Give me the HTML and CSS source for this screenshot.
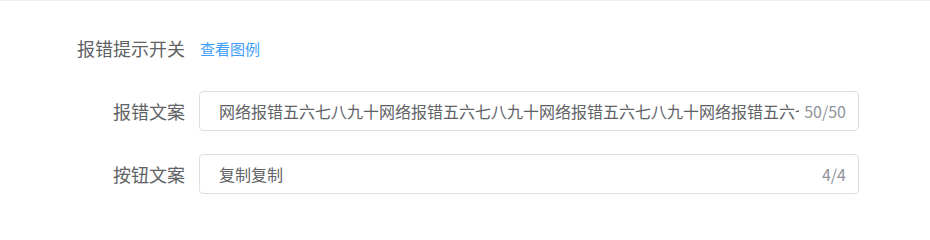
FILE: index.html
```html
<!DOCTYPE html>
<html lang="zh-CN">
<head>
<meta charset="utf-8">
<link rel="stylesheet" href="styles.css">
</head>
<body>
<div class="page">
  <form class="form">
    <div class="form-item">
      <label class="form-label">报错提示开关</label>
      <div class="form-content">
        <a class="link" href="#">查看图例</a>
      </div>
    </div>
    <div class="form-item">
      <label class="form-label">报错文案</label>
      <div class="form-content">
        <div class="input">
          <input class="input-inner" type="text" value="网络报错五六七八九十网络报错五六七八九十网络报错五六七八九十网络报错五六七八九十网络报错五六七八九十">
          <span class="count">50/50</span>
        </div>
      </div>
    </div>
    <div class="form-item">
      <label class="form-label">按钮文案</label>
      <div class="form-content">
        <div class="input">
          <input class="input-inner" type="text" value="复制复制">
          <span class="count">4/4</span>
        </div>
      </div>
    </div>
  </form>
</div>
</body>
</html>
```

FILE: styles.css
```css
html, body {
  margin: 0;
  padding: 0;
  background: #fff;
}
body {
  font-family: "Noto Sans CJK SC", "Noto Sans", sans-serif;
  color: #606266;
}
.page {
  border-top: 1px solid #eeeff2;
  padding-top: 27px;
  height: 221px;
  box-sizing: border-box;
}
.form {
  margin: 0;
}
.form-item {
  display: flex;
  align-items: center;
  height: 40px;
  margin-bottom: 23px;
}
.form-label {
  width: 199px;
  box-sizing: border-box;
  padding-right: 14px;
  text-align: right;
  font-size: 18px;
  line-height: 40px;
  color: #606266;
}
.form-content {
  display: flex;
  align-items: center;
}
.link {
  font-size: 15px;
  color: #409eff;
  text-decoration: none;
  margin-left: 1px;
}
.input {
  display: flex;
  align-items: center;
  width: 660px;
  height: 40px;
  box-sizing: border-box;
  border: 1px solid #dcdfe6;
  border-radius: 4px;
  padding: 0 12px 0 19px;
  background: #fff;
}
.input-inner {
  flex: 1;
  min-width: 0;
  border: 0;
  outline: none;
  padding: 0;
  margin: 0;
  height: 38px;
  font-family: "Noto Sans CJK SC", "Noto Sans", sans-serif;
  font-size: 16px;
  color: #606266;
  background: transparent;
}
.count {
  font-size: 16px;
  color: #909399;
  margin-left: 5px;
  white-space: nowrap;
}
```
